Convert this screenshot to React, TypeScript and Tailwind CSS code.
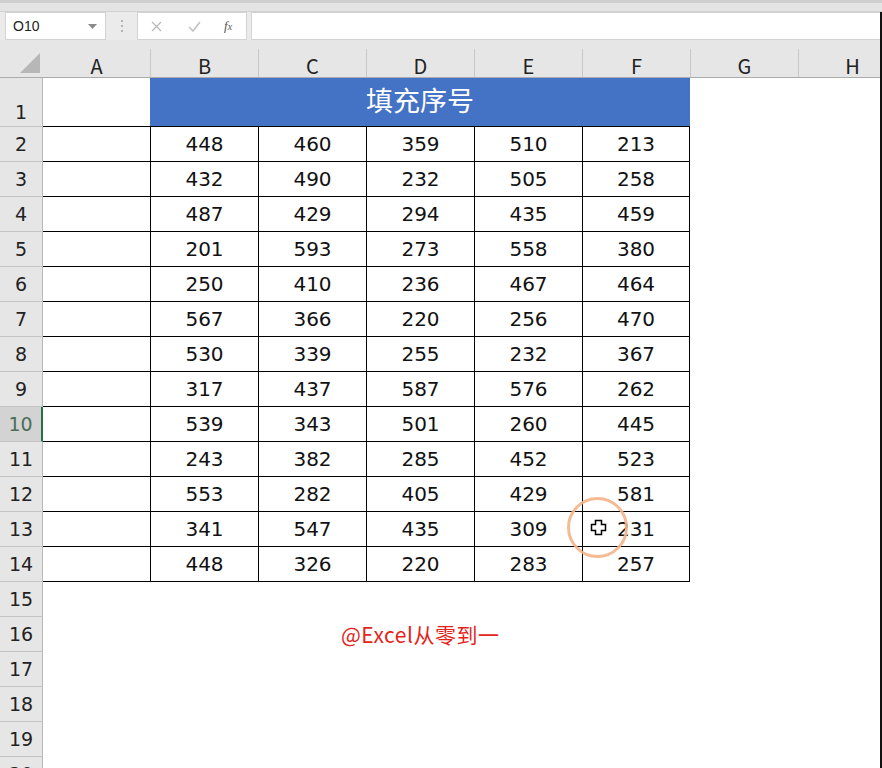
import React from "react";

const DATA: readonly (readonly number[])[] = [
  [448, 460, 359, 510, 213],
  [432, 490, 232, 505, 258],
  [487, 429, 294, 435, 459],
  [201, 593, 273, 558, 380],
  [250, 410, 236, 467, 464],
  [567, 366, 220, 256, 470],
  [530, 339, 255, 232, 367],
  [317, 437, 587, 576, 262],
  [539, 343, 501, 260, 445],
  [243, 382, 285, 452, 523],
  [553, 282, 405, 429, 581],
  [341, 547, 435, 309, 231],
  [448, 326, 220, 283, 257],
];

const COLS = ["A", "B", "C", "D", "E", "F", "G", "H"];
const FONT = { fontFamily: '"Noto Sans CJK SC", "Noto Sans", sans-serif' };
const NUM = { fontFamily: '"DejaVu Sans", "Noto Sans", sans-serif' };

function RowHeader({ label, tall, selected }: { label: number; tall?: boolean; selected?: boolean }): React.JSX.Element {
  return (
    <div
      style={NUM}
      className={`flex w-[43px] shrink-0 justify-center border-b border-[#c4c4c4] text-[19px] leading-none ${
        tall ? "h-[49px] items-end pb-[4px]" : "h-[35px] items-center"
      } ${selected ? "border-r-2 border-r-[#217346] bg-[#d3d3d3] text-[#4a6e5a]" : "border-r border-r-[#b8b8b8] bg-[#e6e6e6] text-[#222]"}`}
    >
      {label}
    </div>
  );
}

export default function App(): React.JSX.Element {
  return (
    <div className="relative flex h-[768px] w-[882px] flex-col overflow-hidden bg-white" style={FONT}>
      {/* ── Top strip ── */}
      <div className="h-[3px] shrink-0 bg-[#cfcfcf]" />
      <div className="h-[9px] shrink-0 border-b border-[#d0d0d0] bg-[#e4e4e4]" />

      {/* ── Formula bar ── */}
      <div className="flex h-[28px] shrink-0 items-start bg-[#ebebeb]">
        <div className="ml-[5px] flex h-[28px] w-[101px] items-center justify-between border border-[#d3d3d3] bg-white pl-[7px] pr-[8px]">
          <span className="text-[14px] text-[#222]" style={{ fontFamily: '"Liberation Sans", sans-serif' }}>O10</span>
          <svg width="9" height="5" viewBox="0 0 9 5"><path d="M0 0h9L4.5 5z" fill="#8a8a8a" /></svg>
        </div>
        <div className="flex h-[28px] w-[31px] flex-col items-center justify-center gap-[3px]">
          <span className="h-[2px] w-[2px] bg-[#b5b5b5]" />
          <span className="h-[2px] w-[2px] bg-[#b5b5b5]" />
          <span className="h-[2px] w-[2px] bg-[#b5b5b5]" />
        </div>
        <div className="flex h-[28px] w-[110px] items-center border border-[#d3d3d3] bg-white">
          <svg className="ml-[13px]" width="11" height="11" viewBox="0 0 11 11"><path d="M1 1l9 9M10 1l-9 9" stroke="#b9b9b9" strokeWidth="1.3" /></svg>
          <svg className="ml-[26px]" width="13" height="11" viewBox="0 0 13 11"><path d="M1 6l4 4 7-9" stroke="#c0c0c0" strokeWidth="1.5" fill="none" /></svg>
          <span className="ml-[23px] text-[13px] italic text-[#555]" style={{ fontFamily: '"Liberation Serif", serif' }}>
            f<span className="text-[10px]">x</span>
          </span>
        </div>
        <div className="ml-[4px] h-[28px] flex-1 border border-[#d3d3d3] bg-white" />
      </div>

      {/* ── Column headers ── */}
      <div className="flex h-[38px] shrink-0 border-b border-[#ababab] bg-[#e6e6e6]">
        <div className="flex w-[43px] shrink-0 items-end justify-end pb-[4px] pr-[3px]">
          <svg width="20" height="20" viewBox="0 0 20 20"><path d="M20 0V20H0z" fill="#b7b7b7" /></svg>
        </div>
        {COLS.map((c) => (
          <div key={c} className={`flex h-full shrink-0 items-end ${c === "A" ? "w-[107px]" : "w-[108px]"}`}>
            {c !== "A" ? <div className="h-[28px] w-px bg-[#c8c8c8]" /> : null}
            <div className="flex flex-1 justify-center pb-[1px] text-[20px] leading-none text-[#222]">{c}</div>
          </div>
        ))}
      </div>

      {/* ── Grid ── */}
      <div className="flex flex-col">
        <div className="flex">
          <RowHeader label={1} tall />
          <div className="h-[49px] w-[107px] shrink-0 border-b border-black" />
          <div className="flex h-[49px] w-[540px] shrink-0 items-center justify-center border-b border-black bg-[#4472c4] pb-[4px] text-[27px] text-white">
            填充序号
          </div>
        </div>
        {DATA.map((row, i) => (
          <div key={i} className="flex">
            <RowHeader label={i + 2} selected={i + 2 === 10} />
            <div className="h-[35px] w-[107px] shrink-0 border-b border-black" />
            {row.map((v, j) => (
              <div
                key={j}
                style={NUM}
                className={`flex h-[35px] w-[108px] shrink-0 items-center justify-center border-b border-l border-black text-[20px] leading-none text-[#111] ${
                  j === 4 ? "border-r" : ""
                }`}
              >
                {v}
              </div>
            ))}
          </div>
        ))}
        {[15, 16, 17, 18, 19, 20].map((n) => (
          <div key={n} className="flex">
            <RowHeader label={n} />
            {n === 16 ? (
              <div className="flex h-[35px] flex-1 items-center pl-[298px] text-[21px] tracking-[0.5px] text-[#e3241b]">@Excel从零到一</div>
            ) : null}
          </div>
        ))}
      </div>

      {/* ── Cursor highlight ── */}
      <div className="absolute left-[567px] top-[497px] h-[61px] w-[61px] rounded-full border-[3px] border-[#f4b48a]/90" />
      <svg className="absolute left-[590px] top-[519px]" width="17" height="17" viewBox="0 0 17 17">
        <path d="M5.5 1.5h6v4h4v6h-4v4h-6v-4h-4v-6h4z" fill="white" stroke="black" strokeWidth="1.5" />
      </svg>

      {/* ── Right edge ── */}
      <div className="absolute right-0 top-[12px] h-[756px] w-[2px] bg-[#111]" />
    </div>
  );
}
